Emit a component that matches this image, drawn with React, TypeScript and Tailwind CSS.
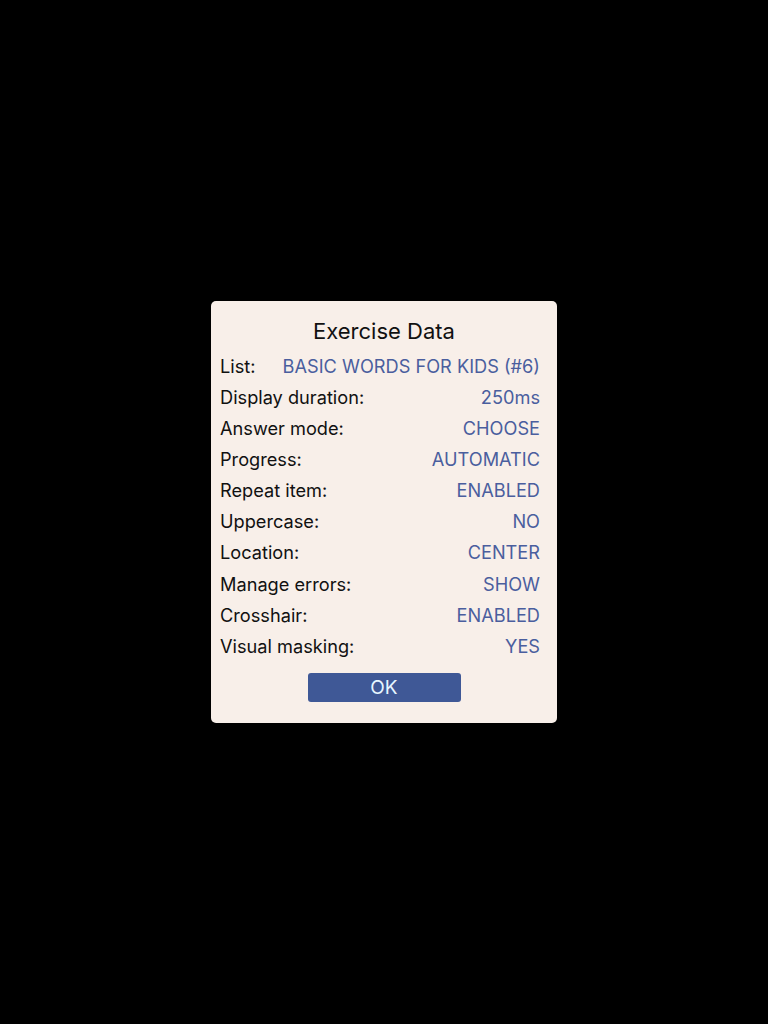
import React from "react";

const rows: [string, string][] = [
  ["List:", "BASIC WORDS FOR KIDS (#6)"],
  ["Display duration:", "250ms"],
  ["Answer mode:", "CHOOSE"],
  ["Progress:", "AUTOMATIC"],
  ["Repeat item:", "ENABLED"],
  ["Uppercase:", "NO"],
  ["Location:", "CENTER"],
  ["Manage errors:", "SHOW"],
  ["Crosshair:", "ENABLED"],
  ["Visual masking:", "YES"],
];

export default function App() {
  return (
    <div
      className="w-[768px] h-[1024px] bg-black flex items-start justify-center"
      style={{ fontFamily: "Inter, 'Liberation Sans', sans-serif" }}
    >
      <div className="mt-[301px] w-[346px] h-[422px] bg-[#f8efe9] rounded-[5px] pt-[16px] pl-[9px] pr-[17px] flex flex-col">
        <div className="text-center text-[22px] leading-[28px] text-[#111] h-[34px] pl-[8px]">
          Exercise Data
        </div>
        {rows.map(([k, v]) => (
          <div key={k} className="flex justify-between items-center h-[31.1px] text-[18.2px]">
            <span className="text-[#111]">{k}</span>
            <span className="text-[#4a5e9e]">{v}</span>
          </div>
        ))}
        <div className="flex justify-center mt-[11px] pl-[8px]">
          <button className="w-[153px] h-[29px] bg-[#3f5896] rounded-[3px] text-[#e6f6ff] text-[19px] leading-[29px]">
            OK
          </button>
        </div>
      </div>
    </div>
  );
}
